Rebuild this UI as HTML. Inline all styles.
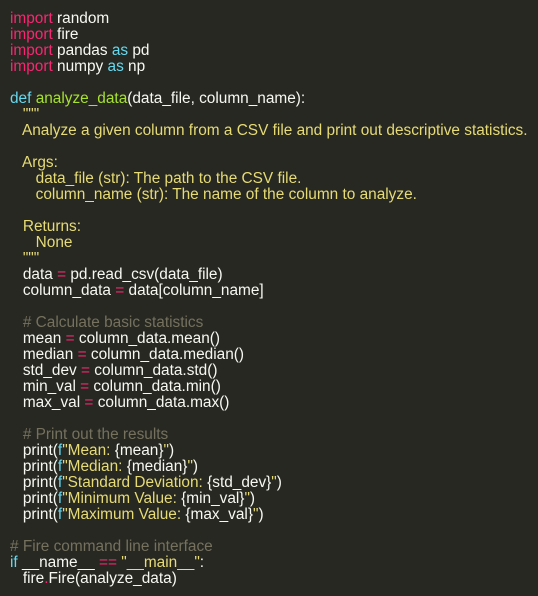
<!DOCTYPE html>
<html><head><meta charset="utf-8"><style>
body{margin:0;background:#272822;width:538px;height:596px;overflow:hidden}
pre{margin:0;padding:11px 0 0 10px;font-family:"Liberation Sans",sans-serif;font-size:15.4px;line-height:16px;color:#f8f8f2;white-space:pre}
.k{color:#f92672}.c{color:#66d9ef}.g{color:#a6e22e}.s{color:#e6db74}.m{color:#75715e}
</style></head><body><pre><span class="k">import</span> random
<span class="k">import</span> fire
<span class="k">import</span> pandas <span class="c">as</span> pd
<span class="k">import</span> numpy <span class="c">as</span> np

<span class="c">def</span> <span class="g">analyze_data</span>(data_file, column_name):
   <span class="s">"""
   Analyze a given column from a CSV file and print out descriptive statistics.

   Args:
      data_file (str): The path to the CSV file.
      column_name (str): The name of the column to analyze.

   Returns:
      None
   """</span>
   data <span class="k">=</span> pd.read_csv(data_file)
   column_data <span class="k">=</span> data[column_name]

   <span class="m"># Calculate basic statistics</span>
   mean <span class="k">=</span> column_data.mean()
   median <span class="k">=</span> column_data.median()
   std_dev <span class="k">=</span> column_data.std()
   min_val <span class="k">=</span> column_data.min()
   max_val <span class="k">=</span> column_data.max()

   <span class="m"># Print out the results</span>
   print(<span class="c">f</span><span class="s">"Mean: </span>{mean}<span class="s">"</span>)
   print(<span class="c">f</span><span class="s">"Median: </span>{median}<span class="s">"</span>)
   print(<span class="c">f</span><span class="s">"Standard Deviation: </span>{std_dev}<span class="s">"</span>)
   print(<span class="c">f</span><span class="s">"Minimum Value: </span>{min_val}<span class="s">"</span>)
   print(<span class="c">f</span><span class="s">"Maximum Value: </span>{max_val}<span class="s">"</span>)

<span class="m"># Fire command line interface</span>
<span class="c">if</span> __name__ <span class="k">==</span> <span class="s">"__main__"</span>:
   fire<span class="k">.</span>Fire(analyze_data)
</pre></body></html>
